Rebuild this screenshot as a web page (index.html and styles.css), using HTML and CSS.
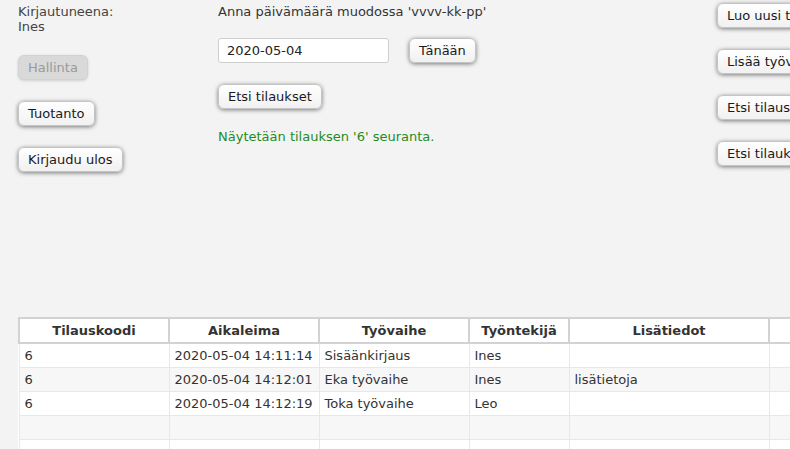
FILE: index.html
```html
<!DOCTYPE html>
<html lang="fi">
<head>
<meta charset="utf-8">
<title>Tilausten seuranta</title>
<link rel="stylesheet" href="styles.css">
</head>
<body>
<div class="top">
  <div class="col-left">
    <div class="who">Kirjautuneena:<br>Ines</div>
    <button class="btn first" disabled>Hallinta</button>
    <button class="btn">Tuotanto</button>
    <button class="btn">Kirjaudu ulos</button>
  </div>
  <div class="col-mid">
    <div class="label">Anna päivämäärä muodossa 'vvvv-kk-pp'</div>
    <div class="date-row">
      <input class="date" type="text" value="2020-05-04">
      <button class="btn today">Tänään</button>
    </div>
    <button class="btn search">Etsi tilaukset</button>
    <div class="status">Näytetään tilauksen '6' seuranta.</div>
  </div>
  <div class="col-right">
    <button class="btn">Luo uusi tilaus</button>
    <button class="btn">Lisää työvaihe</button>
    <button class="btn">Etsi tilaus koodilla</button>
    <button class="btn">Etsi tilauksia päivämäärällä</button>
  </div>
</div>
<table class="grid">
  <colgroup>
    <col class="w150"><col class="w150"><col class="w150"><col class="w100"><col class="w200"><col class="w150">
  </colgroup>
  <thead>
    <tr><th>Tilauskoodi</th><th>Aikaleima</th><th>Työvaihe</th><th>Työntekijä</th><th>Lisätiedot</th><th></th></tr>
  </thead>
  <tbody>
    <tr><td>6</td><td>2020-05-04 14:11:14</td><td>Sisäänkirjaus</td><td>Ines</td><td></td><td></td></tr>
    <tr><td>6</td><td>2020-05-04 14:12:01</td><td>Eka työvaihe</td><td>Ines</td><td>lisätietoja</td><td></td></tr>
    <tr><td>6</td><td>2020-05-04 14:12:19</td><td>Toka työvaihe</td><td>Leo</td><td></td><td></td></tr>
    <tr><td></td><td></td><td></td><td></td><td></td><td></td></tr>
    <tr><td></td><td></td><td></td><td></td><td></td><td></td></tr>
  </tbody>
</table>
</body>
</html>
```
FILE: styles.css
```css
html, body {
  margin: 0;
  padding: 0;
  overflow: hidden;
}
body {
  background: #f3f3f3;
  font-family: "DejaVu Sans", sans-serif;
  font-size: 13px;
  color: #333;
  width: 790px;
  height: 449px;
}
.top {
  display: flex;
  height: 317px;
  box-sizing: border-box;
  padding-left: 18px;
  width: 1200px;
}
.col-left {
  width: 200px;
  flex: none;
  display: flex;
  flex-direction: column;
  align-items: flex-start;
  padding-top: 4px;
}
.who {
  line-height: 15px;
  color: #444;
}
.col-mid {
  width: 499px;
  flex: none;
  display: flex;
  flex-direction: column;
  align-items: flex-start;
  padding-top: 4px;
}
.col-right {
  flex: none;
  display: flex;
  flex-direction: column;
  align-items: flex-start;
  padding-top: 3px;
}
.btn {
  font-family: "DejaVu Sans", sans-serif;
  font-size: 13px;
  line-height: 16px;
  color: #1a1a1a;
  padding: 4px 9px 3px;
  border: 1px solid #c4c4c4;
  border-radius: 6px;
  background: linear-gradient(#ffffff, #f1f1f1);
  box-shadow: 0 1px 4px rgba(0, 0, 0, 0.5);
  margin: 0 0 21px 0;
  white-space: nowrap;
  cursor: pointer;
}
.btn.first {
  margin-top: 21px;
}
.btn:disabled {
  background: #d9d9d9;
  color: #999;
  border-color: #d2d2d2;
  box-shadow: 0 1px 3px rgba(0, 0, 0, 0.15);
}
.label {
  line-height: 15px;
  color: #333;
}
.date-row {
  display: flex;
  align-items: flex-start;
  margin-top: 19px;
  margin-bottom: 21px;
}
.date {
  width: 171px;
  height: 25px;
  box-sizing: border-box;
  border: 1px solid #cfcfcf;
  border-radius: 3px;
  background: #fff;
  padding: 0 8px;
  font-family: "DejaVu Sans", sans-serif;
  font-size: 13px;
  color: #222;
  margin: 0;
}
.btn.today {
  margin: 0 0 0 20px;
}
.btn.search {
  margin-bottom: 20px;
}
.status {
  color: #1f8c1f;
  line-height: 15px;
}
.grid {
  margin-left: 18px;
  border-collapse: collapse;
  table-layout: fixed;
  width: 900px;
  background: #fff;
}
.w150 { width: 150px; }
.w100 { width: 100px; }
.w200 { width: 200px; }
.grid th {
  height: 23px;
  padding: 0 5px;
  border: 2px solid #d2d2d2;
  font-weight: bold;
  text-align: center;
  color: #333;
  background: #fff;
}
.grid td {
  height: 23px;
  padding: 0 5px;
  border: 1px solid #e8e8e8;
  color: #333;
  white-space: nowrap;
  overflow: hidden;
}
.grid tbody tr:nth-child(even) td {
  background: #f7f7f7;
}
.grid tbody tr:first-child td {
  border-top: none;
}
```
